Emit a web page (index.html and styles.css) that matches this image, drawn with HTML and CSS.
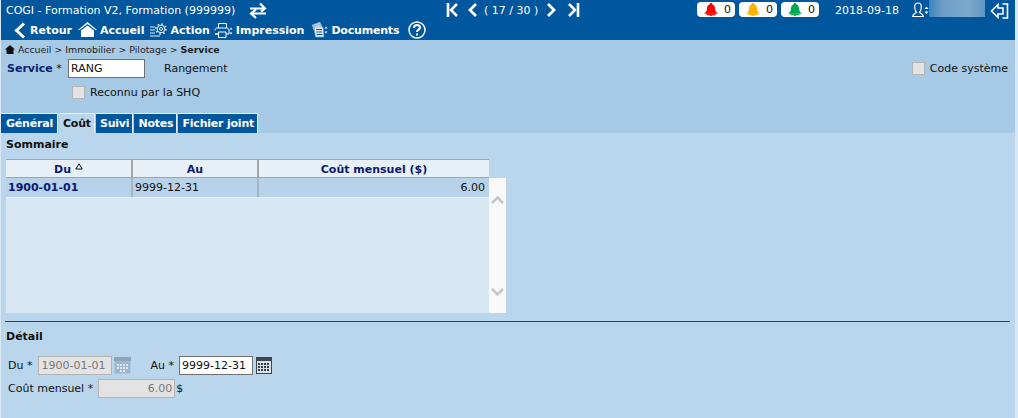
FILE: index.html
```html
<!DOCTYPE html>
<html lang="fr">
<head>
  <meta charset="UTF-8">
  <title>COGI - Service</title>
  <link rel="stylesheet" href="styles.css">
</head>
<body>

<div class="page">
  <!-- Barre du haut -->
  <div class="header">
    <div class="header-top">
      <span class="app-title">COGI - Formation V2, Formation (999999)</span>
      <svg class="ico-swap" width="18" height="17" viewBox="0 0 18 17" fill="none" stroke="#fff" stroke-width="2.200">
        <path d="M1 6.500h14.500M11 1.500l5 5-4 3"/>
        <path d="M17 11.500H2.500M7 7.500l-5 4 5 4.500"/>
      </svg>

      <div class="pager">
        <svg class="pager-first" width="12" height="14" viewBox="0 0 12 14" fill="none" stroke="#fff" stroke-width="2.600"><path d="M2 0v14"/><path d="M11 1 5 7l6 6"/></svg>
        <svg class="pager-prev" width="10" height="14" viewBox="0 0 10 14" fill="none" stroke="#fff" stroke-width="2.800"><path d="M8 1 2 7l6 6"/></svg>
        <span class="pager-text">( 17 / 30 )</span>
        <svg class="pager-next" width="10" height="14" viewBox="0 0 10 14" fill="none" stroke="#fff" stroke-width="2.800"><path d="m2 1 6 6-6 6"/></svg>
        <svg class="pager-last" width="13" height="14" viewBox="0 0 13 14" fill="none" stroke="#fff" stroke-width="2.600"><path d="M2 1l6 6-6 6"/><path d="M11 0v14"/></svg>
      </div>

      <div class="alerts">
        <span class="alert">
          <svg width="14" height="13" viewBox="0 0 14 13" fill="#f00"><path d="M7 0c.8 0 1.300.5 1.300 1.200C10.300 1.900 11 3.500 11 5.500c0 2.500 1 3.500 2.500 4.700v.6H.5v-.6C2 9 3 8 3 5.500c0-2 .7-3.600 2.700-4.300C5.700.5 6.200 0 7 0z"/><path d="M2.500 11.600h9" stroke="#f00" stroke-width="1.200"/><circle cx="7" cy="11.800" r="1.200"/></svg>
          0
        </span>
        <span class="alert">
          <svg width="14" height="13" viewBox="0 0 14 13" fill="#ffb000"><path d="M7 0c.8 0 1.300.5 1.300 1.200C10.300 1.900 11 3.500 11 5.500c0 2.500 1 3.500 2.500 4.700v.6H.5v-.6C2 9 3 8 3 5.500c0-2 .7-3.600 2.700-4.300C5.700.5 6.200 0 7 0z"/><path d="M2.500 11.600h9" stroke="#ffb000" stroke-width="1.200"/><circle cx="7" cy="11.800" r="1.200"/></svg>
          0
        </span>
        <span class="alert">
          <svg width="14" height="13" viewBox="0 0 14 13" fill="#00a651"><path d="M7 0c.8 0 1.300.5 1.300 1.200C10.300 1.900 11 3.500 11 5.500c0 2.500 1 3.500 2.500 4.700v.6H.5v-.6C2 9 3 8 3 5.500c0-2 .7-3.600 2.700-4.300C5.700.5 6.200 0 7 0z"/><path d="M2.500 11.600h9" stroke="#00a651" stroke-width="1.200"/><circle cx="7" cy="11.800" r="1.200"/></svg>
          0
        </span>
      </div>

      <span class="today">2018-09-18</span>

      <svg class="ico-user" width="17" height="16" viewBox="0 0 17 16" fill="none" stroke="#fff" stroke-width="1.200">
        <path d="M.7 14.500c0-2.500 2-3 3.800-4C3.200 9 2.700 7 2.700 5c0-2.500 1.300-4 3.300-4s3.300 1.500 3.300 4c0 2-.5 4-1.800 5.500 1.800 1 3.800 1.500 3.800 4z"/>
        <path d="m12.500 7 2-2.500 2 2.500zM12.500 9.500l2 2.500 2-2.500z" fill="#fff" stroke="none"/>
      </svg>
      <span class="user-blur"></span>
      <svg class="ico-exit" width="19" height="16" viewBox="0 0 19 16" fill="none" stroke="#fff" stroke-width="1.500">
        <path d="M1.500 8 8 1.500V5h5v6H8v3.500z"/>
        <path d="M12.500 1h5v14h-5" stroke-width="1.600"/>
      </svg>
    </div>

    <div class="toolbar">
      <a class="tool tool-back">
        <svg width="14" height="17" viewBox="0 0 14 17" fill="none" stroke="#fff" stroke-width="3"><path d="M11 1.500 3.500 8.500l7.500 7"/></svg>
        Retour
      </a>
      <a class="tool">
        <svg width="19" height="16" viewBox="0 0 19 16" fill="#fff"><path d="M9.500 0 19 8h-1.500L9.500 2 1.500 8H0z"/><path d="M9.500 3.500 16 8.500V15H3V8.500z"/></svg>
        Accueil
      </a>
      <a class="tool tool-action">
        <svg width="17" height="14" viewBox="0 0 17 14" fill="none" stroke="#fff" stroke-width=".9"><path d="M0 4h5M0 7h5M0 10h5M0 13h10"/><circle cx="11" cy="6" r="3.800"/><circle cx="11" cy="6" r="1.500"/><circle cx="11" cy="6" r="5" stroke-dasharray="1.500 2.400" stroke-width="1.500"/></svg>
        Action
      </a>
      <a class="tool">
        <svg width="19" height="15" viewBox="0 0 19 15" fill="none" stroke="#fff"><path d="M4.500 5V.5h8V5M1 7.500c0-1.500 1-2.500 2-2.500h10c1 0 2 1 2 2.500V11h-3M4 11H1z"/><path d="M4.500 9h7.500v5.500H4.500z"/><path d="m15.500 6.500 1.500-2 1.500 2zM15.500 9.500l1.500 2 1.500-2z" fill="#fff" stroke="none"/></svg>
        Impression
      </a>
      <a class="tool tool-docs">
        <svg width="17" height="16" viewBox="0 0 17 16" fill="#c9dced" stroke="#6f9bc4" stroke-width=".6"><path d="M1 3 9 0l2 5-7 6z"/><path d="m2 4 8-2 1 8-6 3z"/><path d="M3 5h9l1 10H4.500z" fill="#eaf2f8"/><path d="M5 7.500h6M5.300 10h6M5.600 12.500h6" stroke="#00579d" stroke-width="1"/><path d="m13.500 6.500 1.500-2 1.500 2zM13.500 9.500l1.500 2 1.500-2z" fill="#fff" stroke="none"/></svg>
        Documents
      </a>
      <svg class="ico-help" width="18" height="18" viewBox="0 0 18 18" fill="none" stroke="#fff" stroke-width="1.500">
        <circle cx="9" cy="9" r="8"/>
        <path d="M6 7c0-2 1.500-3 3-3s3 1 3 2.700c0 2-3 2-3 4.300" stroke-width="2"/>
        <path d="M8 12.500h2v2H8z" fill="#fff" stroke="none"/>
      </svg>
    </div>
  </div>

  <!-- Entete du formulaire -->
  <div class="top-zone">
    <div class="crumbs">
      <svg width="10" height="9" viewBox="0 0 10 9" fill="#111"><path d="M5 0 10 4.500H8.500V9h-7V4.500H0z"/></svg>
      <span class="crumb-text">Accueil &gt; Immobilier &gt; Pilotage &gt; <b>Service</b></span>
    </div>
    <div class="service-row">
      <label class="service-label"><b>Service</b> *</label>
      <input class="input input-code" type="text" value="RANG">
      <span class="service-name">Rangement</span>
      <label class="check check-right"><span class="box"></span>Code système</label>
    </div>
    <label class="check check-shq"><span class="box"></span>Reconnu par la SHQ</label>

    <div class="tabs">
      <a class="tab tab-first">Général</a>
      <a class="tab active">Coût</a>
      <a class="tab">Suivi</a>
      <a class="tab">Notes</a>
      <a class="tab">Fichier joint</a>
    </div>
  </div>

  <div class="content">
    <h3 class="section-title">Sommaire</h3>

    <div class="grid-wrap">
      <div class="grid-head">
        <div class="col-du">Du <svg class="sort" width="8" height="7" viewBox="0 0 8 7" fill="none" stroke="#111"><path d="M4 .8 7.200 6H.8z"/></svg></div>
        <div class="col-au">Au</div>
        <div class="col-cout">Coût mensuel ($)</div>
      </div>
      <div class="grid-main">
        <div class="grid-body">
          <div class="grid-row">
            <div class="col-du cell-key">1900-01-01</div>
            <div class="col-au">9999-12-31</div>
            <div class="col-cout">6.00</div>
          </div>
        </div>
        <div class="scroll">
          <svg width="13" height="8" viewBox="0 0 13 8" fill="none" stroke="#c6c6c6" stroke-width="2.500"><path d="m1 7 5.500-5.500L12 7"/></svg>
          <svg width="13" height="8" viewBox="0 0 13 8" fill="none" stroke="#c6c6c6" stroke-width="2.500"><path d="m1 1 5.500 5.500L12 1"/></svg>
        </div>
      </div>
    </div>

    <div class="separator"></div>

    <h3 class="section-title">Détail</h3>

    <div class="form-row">
      <label class="lbl lbl-du">Du *</label>
      <input class="input input-date disabled" type="text" value="1900-01-01" disabled>
      <svg class="cal" width="17" height="17" viewBox="0 0 17 17"><rect x=".5" y=".5" width="16" height="16" fill="#9db8ce"/><rect x="0" y="0" width="17" height="4" fill="#8fa6ba"/><path d="M3 7h2v2H3zM6 7h2v2H6zM9 7h2v2H9zM12 7h2v2h-2zM3 10h2v2H3zM6 10h2v2H6zM9 10h2v2H9zM12 10h2v2h-2zM6 13h2v2H6zM9 13h2v2H9z" fill="#dbe6ef"/></svg>
      <label class="lbl lbl-au">Au *</label>
      <input class="input input-date" type="text" value="9999-12-31">
      <svg class="cal cal-on" width="16" height="17" viewBox="0 0 16 17"><rect width="16" height="17" fill="#3d4650"/><rect x="1" y="4" width="14" height="12" fill="#d9e3ec"/><path d="M2 6h2v2H2zM5 6h2v2H5zM8 6h2v2H8zM11 6h2v2h-2zM2 9h2v2H2zM5 9h2v2H5zM8 9h2v2H8zM11 9h2v2h-2zM2 12h2v2H2zM5 12h2v2H5zM8 12h2v2H8zM11 12h2v2h-2z" fill="#333d46"/></svg>
    </div>

    <div class="form-row">
      <label class="lbl">Coût mensuel *</label>
      <input class="input input-amount disabled" type="text" value="6.00" disabled>
      <span class="unit">$</span>
    </div>
  </div>
</div>

</body>
</html>
```
FILE: styles.css
```css
html, body {
  margin: 0;
  padding: 0;
  height: 100%;
  overflow: hidden;
}

body {
  font-family: "DejaVu Sans", Verdana, sans-serif;
  font-size: 11px;
  color: #111;
  background-color: #d8e7f4;
}

.page {
  width: 1014px;
  height: 418px;
  margin-left: 1px;
  display: flex;
  flex-direction: column;
}

/* Barre du haut */
.header {
  background-color: #00579d;
  color: #fff;
  height: 40px;
}

.header-top {
  display: flex;
  align-items: center;
  height: 20px;
  padding-left: 5px;
}

.app-title {
  width: 243px;
  white-space: nowrap;
}

.pager {
  display: flex;
  align-items: center;
  margin-left: 179px;
  width: 251px;
}

.pager-prev {
  margin-left: 10px;
}

.pager-text {
  margin-left: 6px;
  width: 57px;
  white-space: nowrap;
}

.pager-next {
  margin-left: 5px;
}

.pager-last {
  margin-left: 11px;
}

.alerts {
  display: flex;
  gap: 4px;
  margin-top: -1px;
}

.alert {
  display: flex;
  align-items: center;
  justify-content: space-between;
  box-sizing: border-box;
  width: 38px;
  height: 15px;
  padding: 0 4px 0 7px;
  background: #fff;
  border-radius: 4px;
  color: #111;
}

.today {
  margin-left: 16px;
  width: 77px;
}

.user-blur {
  width: 56px;
  height: 17px;
  align-self: flex-start;
  background: linear-gradient(90deg, #3f84bb, #6e9fc8 25%, #7ea9cd 70%, #5f96c4);
  margin-right: 5px;
}

.ico-exit {
  margin-top: 2px;
}

.toolbar {
  display: flex;
  align-items: center;
  height: 20px;
  padding-left: 12px;
}

.tool {
  display: flex;
  align-items: center;
  gap: 3px;
  font-weight: bold;
  color: #fff;
  white-space: nowrap;
  margin-right: 4px;
}

.tool-back {
  margin-right: 6px;
}

.tool-action svg,
.tool-docs svg {
  margin-left: 2px;
}

.tool-docs {
  letter-spacing: -0.2px;
  margin-left: 1px;
}

.ico-help {
  margin-left: 5px;
}

/* Entete du formulaire */
.top-zone {
  background-color: #a6c9e5;
  height: 93px;
  display: flex;
  flex-direction: column;
}

.crumbs {
  display: flex;
  align-items: center;
  gap: 3px;
  height: 18px;
  padding-left: 4px;
  font-size: 9.400px;
}

.crumb-text {
  color: #222;
}

.service-row {
  display: flex;
  align-items: center;
  height: 19px;
  margin-top: 1px;
  padding: 0 7px 0 6px;
}

.service-label {
  width: 61px;
  white-space: nowrap;
}

.service-label b {
  color: #0b2270;
}

.service-name {
  margin-left: 19px;
  flex: 1;
}

.input {
  font-family: inherit;
  font-size: 11px;
  height: 19px;
  box-sizing: border-box;
  border: 1px solid #707070;
  padding: 0 2px;
  background: #fff;
  color: #111;
  margin: 0;
}

.input-code {
  width: 77px;
}

.input.disabled {
  background: #e3e3e3;
  border-color: #b3b3b3;
  color: #777;
}

.check {
  display: flex;
  align-items: center;
  gap: 5px;
  white-space: nowrap;
}

.box {
  width: 13px;
  height: 13px;
  box-sizing: border-box;
  background: #e3e3e3;
  border: 1px solid #b5b5b5;
}

.check-shq {
  margin-left: 71px;
  margin-top: 6px;
  height: 17px;
}

.tabs {
  display: flex;
  gap: 1px;
  margin-top: auto;
}

.tab {
  background: #00579d;
  color: #fff;
  font-weight: bold;
  letter-spacing: -0.2px;
  height: 20px;
  line-height: 19px;
  padding: 0 3px 0 4px;
  border-top: 1px solid #e8f0f7;
  border-right: 1px solid #e8f0f7;
  box-sizing: border-box;
  white-space: nowrap;
}

.tab-first {
  padding: 0 4px 0 5px;
}

.tab.active {
  background: #bad6ec;
  color: #111;
}

/* Contenu */
.content {
  flex: 1;
  background-color: #bad6ec;
  padding-left: 5px;
}

.section-title {
  font-size: 11px;
  font-weight: bold;
  margin: 0;
  height: 26px;
  line-height: 24px;
}

.grid-wrap {
  width: 500px;
}

.grid-head {
  display: flex;
  width: 483px;
  height: 19px;
  line-height: 19px;
  background: #e8f0f7;
  border-top: 1px solid #a5a5a5;
  border-bottom: 1px solid #a5a5a5;
  box-sizing: border-box;
  font-weight: bold;
  color: #0b1a70;
  text-align: center;
}

.sort {
  vertical-align: 3px;
}

.col-du {
  width: 127px;
  box-sizing: border-box;
  border-right: 2px solid #a5a5a5;
}

.col-au {
  width: 126px;
  box-sizing: border-box;
  border-right: 2px solid #a5a5a5;
}

.col-cout {
  width: 230px;
  box-sizing: border-box;
}

.grid-main {
  display: flex;
  height: 135px;
}

.grid-body {
  width: 483px;
  background: #d7e7f4;
}

.grid-row {
  display: flex;
  height: 20px;
  line-height: 19px;
  background: #b7d2e9;
  border-bottom: 1px solid #e8f0f7;
  box-sizing: border-box;
}

.grid-row .col-du,
.grid-row .col-au {
  border-right-color: #a5b5c5;
  padding-left: 2px;
}

.grid-row .col-cout {
  text-align: right;
  padding-right: 4px;
}

.cell-key {
  font-weight: bold;
  color: #0b1a70;
}

.scroll {
  width: 17px;
  background: #f8f8f8;
  display: flex;
  flex-direction: column;
  justify-content: space-between;
  align-items: center;
  padding: 18px 0 17px;
  box-sizing: border-box;
}

.separator {
  border-top: 1px solid #0a4a85;
  width: 1005px;
  margin-top: 8px;
  margin-left: -1px;
}

.separator + .section-title {
  margin-top: 3px;
  margin-bottom: 5px;
}

.form-row {
  display: flex;
  align-items: center;
  height: 19px;
  margin-bottom: 4px;
  padding-left: 2px;
}

.lbl {
  white-space: nowrap;
  margin-right: 5px;
}

.lbl-du {
  margin-right: 6px;
}

.lbl-au {
  margin-left: 19px;
}

.input-date {
  width: 74px;
}

.input-amount {
  width: 77px;
  text-align: right;
}

.cal {
  margin-left: 2px;
}

.cal-on {
  margin-left: 3px;
}

.unit {
  margin-left: 1px;
}
```
